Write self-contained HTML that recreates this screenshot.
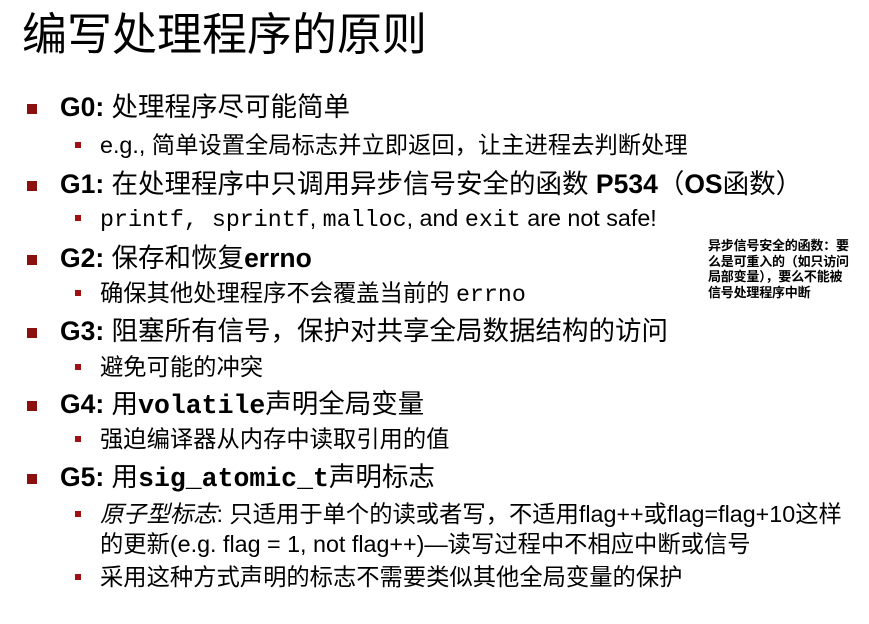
<!DOCTYPE html>
<html><head><meta charset="utf-8"><style>
body{margin:0;width:869px;height:624px;background:#fff;position:relative;overflow:hidden;font-family:"Liberation Sans","Noto Sans CJK SC",sans-serif;color:#000}
.l{position:absolute;white-space:nowrap;line-height:1}
.t{left:22px;top:12px;font-size:45px}
.m{left:60px;font-size:26.5px}
.s{left:100px;font-size:23.3px}
.bm{position:absolute;left:27px;width:10px;height:10px;background:#8b1010}
.bs{position:absolute;left:75px;width:6px;height:6px;background:#a01010}
b{font-weight:bold}
code{font-family:"Liberation Mono",monospace}
.note{position:absolute;left:708px;top:238px;font-size:13px;font-weight:bold;line-height:15.5px;white-space:nowrap;letter-spacing:-0.2px}
</style></head><body>
<div class="l t">编写处理程序的原则</div>

<div class="bm" style="top:104px"></div><div class="l m" style="top:94px"><b>G0:</b> 处理程序尽可能简单</div>
<div class="bs" style="top:142px"></div><div class="l s" style="top:134px">e.g., 简单设置全局标志并立即返回，让主进程去判断处理</div>

<div class="bm" style="top:181px"></div><div class="l m" style="top:171px"><b>G1:</b> 在处理程序中只调用异步信号安全的函数 <b>P534</b>（<b>OS</b>函数）</div>
<div class="bs" style="top:215px"></div><div class="l s" style="top:207px"><code>printf, sprintf</code>, <code>malloc</code>, and <code>exit</code> are not safe!</div>

<div class="bm" style="top:255px"></div><div class="l m" style="top:245px"><b>G2:</b> 保存和恢复<b>errno</b></div>
<div class="bs" style="top:290px"></div><div class="l s" style="top:282px">确保其他处理程序不会覆盖当前的 <code>errno</code></div>

<div class="bm" style="top:328px"></div><div class="l m" style="top:318px"><b>G3:</b> 阻塞所有信号，保护对共享全局数据结构的访问</div>
<div class="bs" style="top:364px"></div><div class="l s" style="top:356px">避免可能的冲突</div>

<div class="bm" style="top:401px"></div><div class="l m" style="top:391px"><b>G4:</b> 用<b><code>volatile</code></b>声明全局变量</div>
<div class="bs" style="top:436px"></div><div class="l s" style="top:428px">强迫编译器从内存中读取引用的值</div>

<div class="bm" style="top:474px"></div><div class="l m" style="top:464px"><b>G5:</b> 用<b><code>sig_atomic_t</code></b>声明标志</div>
<div class="bs" style="top:511px"></div><div class="l s" style="top:503px"><i>原子型标志</i>: 只适用于单个的读或者写，不适用flag++或flag=flag+10这样</div>
<div class="l s" style="top:533px">的更新(e.g. flag = 1, not flag++)—读写过程中不相应中断或信号</div>
<div class="bs" style="top:574px"></div><div class="l s" style="top:566px">采用这种方式声明的标志不需要类似其他全局变量的保护</div>

<div class="note">异步信号安全的函数：要<br>么是可重入的（如只访问<br>局部变量），要么不能被<br>信号处理程序中断</div>
</body></html>
